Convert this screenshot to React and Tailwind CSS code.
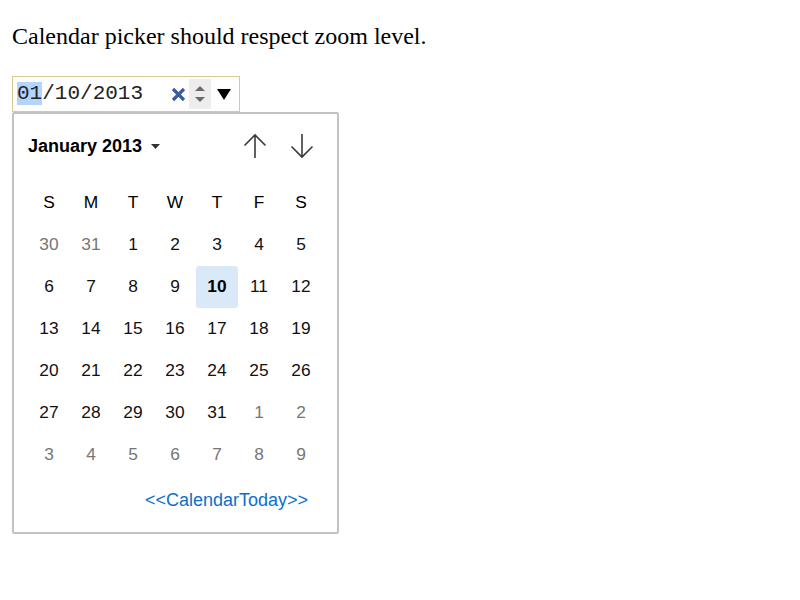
const weeks = [
  [[30, true], [31, true], [1], [2], [3], [4], [5]],
  [[6], [7], [8], [9], [10], [11], [12]],
  [[13], [14], [15], [16], [17], [18], [19]],
  [[20], [21], [22], [23], [24], [25], [26]],
  [[27], [28], [29], [30], [31], [1, true], [2, true]],
  [[3, true], [4, true], [5, true], [6, true], [7, true], [8, true], [9, true]],
];

const dayNames = ['S', 'M', 'T', 'W', 'T', 'F', 'S'];

function ArrowIcon({ down }) {
  return (
    <svg width="24" height="26" viewBox="0 0 24 26" fill="none" stroke="#3a3a3a" strokeWidth="1.6">
      {down ? (
        <path d="M12 1 V24 M1.5 13.5 L12 24 L22.5 13.5" />
      ) : (
        <path d="M12 25 V2 M1.5 12.5 L12 2 L22.5 12.5" />
      )}
    </svg>
  );
}

function DateInput() {
  return (
    <div className="flex items-center h-[36px] w-[228px] border border-[#dfc592] bg-white pl-[4px] pr-[8px]">
      <span className="font-['Liberation_Mono',monospace] text-[21px] leading-[24px] text-[#222]">
        <span className="bg-[#b3d4fc]">01</span>/10/2013
      </span>
      <svg className="ml-auto" width="15" height="15" viewBox="0 0 15 15">
        <path d="M2 2 L13 13 M13 2 L2 13" stroke="#3b5c9c" strokeWidth="3.2" strokeLinecap="butt" />
      </svg>
      <div className="ml-[3px] w-[22px] h-[30px] bg-[#ededed] flex flex-col items-center justify-center gap-[6px]">
        <svg width="10" height="5" viewBox="0 0 10 5">
          <path d="M0 5 L5 0 L10 5 Z" fill="#6a6a6a" />
        </svg>
        <svg width="10" height="5" viewBox="0 0 10 5">
          <path d="M0 0 L10 0 L5 5 Z" fill="#6a6a6a" />
        </svg>
      </div>
      <svg className="ml-[6px]" width="14" height="11" viewBox="0 0 14 11">
        <path d="M0 0 L14 0 L7 11 Z" fill="#000" />
      </svg>
    </div>
  );
}

function CalendarPopup() {
  return (
    <div className="w-[327px] border-2 border-[#c2c2c2] rounded-[2px] bg-white px-[14px] pt-[12px] pb-[20px] font-['Liberation_Sans',Arial,sans-serif] text-[#111]">
      <div className="flex items-center justify-between h-[40px]">
        <div className="flex items-center gap-[9px]">
          <span className="text-[18px] font-bold leading-none text-black">January 2013</span>
          <svg width="9" height="5" viewBox="0 0 9 5">
            <path d="M0 0 L9 0 L4.5 5 Z" fill="#333" />
          </svg>
        </div>
        <div className="flex items-center gap-[5px]">
          <button type="button" className="w-[42px] h-[40px] flex items-center justify-center">
            <ArrowIcon />
          </button>
          <button type="button" className="w-[42px] h-[40px] flex items-center justify-center">
            <ArrowIcon down />
          </button>
        </div>
      </div>

      <div className="grid grid-cols-[repeat(7,42px)] mt-[16px] text-[17.33px]">
        {dayNames.map((d, i) => (
          <div key={i} className="h-[42px] flex items-center justify-center text-black">
            {d}
          </div>
        ))}
        {weeks.flat().map(([n, other], i) => (
          <div
            key={i}
            className={
              n === 10 && !other
                ? 'h-[42px] flex items-center justify-center rounded-[3px] bg-[#dae9f8] font-bold text-black'
                : other
                ? 'h-[42px] flex items-center justify-center text-[#767676]'
                : 'h-[42px] flex items-center justify-center text-[#111]'
            }
          >
            {n}
          </div>
        ))}
      </div>

      <div className="flex justify-end mt-[12px] pr-[15px]">
        <span className="text-[18px] leading-[24px] text-[#0a6fcf]">&lt;&lt;CalendarToday&gt;&gt;</span>
      </div>
    </div>
  );
}

export default function App() {
  return (
    <div className="min-h-screen bg-white px-[12px] font-['Liberation_Serif',serif]">
      <p className="pt-[22px] text-[24px] leading-[28px] text-black">
        Calendar picker should respect zoom level.
      </p>
      <div className="mt-[26px]">
        <DateInput />
        <CalendarPopup />
      </div>
    </div>
  );
}
